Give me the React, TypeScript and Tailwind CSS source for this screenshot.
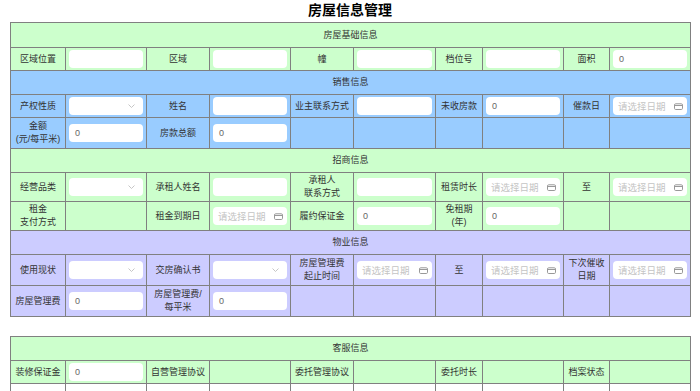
import React from "react";

function Inp({ v }: { v?: string }) {
  return (
    <div className="h-[18px] w-full rounded-[4px] bg-white flex items-center px-[6px] text-[9px] text-[#666] text-left">
      {v ?? ""}
    </div>
  );
}

function Sel() {
  return (
    <div className="h-[18px] w-full rounded-[4px] bg-white flex items-center justify-end pr-[8px]">
      <svg width="7" height="4" viewBox="0 0 7 4">
        <path d="M0.5 0.5 L3.5 3.5 L6.5 0.5" fill="none" stroke="#c0c0c0" strokeWidth="0.9" />
      </svg>
    </div>
  );
}

function DateInp() {
  return (
    <div className="h-[18px] w-full rounded-[4px] bg-white flex items-center justify-between pl-[5px] pr-[4px] text-[9.5px] text-[#c4c4c4] whitespace-nowrap">
      <span>请选择日期</span>
      <svg width="9" height="7" viewBox="0 0 9 7" className="shrink-0">
        <rect x="0.5" y="0.8" width="8" height="5.7" rx="1.2" fill="none" stroke="#999" strokeWidth="1" />
        <line x1="0.5" y1="2.5" x2="8.5" y2="2.5" stroke="#999" strokeWidth="1" />
      </svg>
    </div>
  );
}

const td = "border border-[#808080] px-[3px] py-0 text-center align-middle text-[9px] leading-[13px] text-[#333]";
const lab = "border border-[#808080] px-0 py-0 text-center align-middle text-[9px] leading-[13px] text-[#333] whitespace-nowrap";

function L({ children }: { children?: React.ReactNode }) {
  return <td className={lab}>{children}</td>;
}
function C({ children }: { children?: React.ReactNode }) {
  return <td className={td}>{children}</td>;
}

function Cols() {
  return (
    <colgroup>
      <col className="w-[55px]" />
      <col className="w-[81px]" />
      <col className="w-[63px]" />
      <col className="w-[81px]" />
      <col className="w-[63px]" />
      <col className="w-[82px]" />
      <col className="w-[47px]" />
      <col className="w-[81px]" />
      <col className="w-[46px]" />
      <col className="w-[81px]" />
    </colgroup>
  );
}

function Head({ text, bg, h }: { text: string; bg: string; h: string }) {
  return (
    <tr className={`${bg} ${h}`}>
      <td colSpan={10} className={td}>{text}</td>
    </tr>
  );
}

const tableCls =
  "table-fixed w-[680px] border-collapse border border-t-[#aaa] border-l-[#888] border-r-[#444] border-b-[#333]";

export default function App() {
  const G = "bg-[#ccffcc]";
  const B = "bg-[#99ccff]";
  const P = "bg-[#ccccff]";
  return (
    <div className="w-[700px] h-[391px] overflow-hidden bg-white font-['Liberation_Sans','Noto_Sans_CJK_SC',sans-serif]">
      <div className="h-[22px] text-center text-[14px] font-bold leading-[20px] text-black">房屋信息管理</div>
      <div className="px-[10px]">
        <table className={tableCls}>
          <Cols />
          <tbody>
            <Head text="房屋基础信息" bg={G} h="h-[25px]" />
            <tr className={`${G} h-[23px]`}>
              <L>区域位置</L><C><Inp /></C>
              <L>区域</L><C><Inp /></C>
              <L>幢</L><C><Inp /></C>
              <L>档位号</L><C><Inp /></C>
              <L>面积</L><C><Inp v="0" /></C>
            </tr>
            <Head text="销售信息" bg={B} h="h-[24px]" />
            <tr className={`${B} h-[23px]`}>
              <L>产权性质</L><C><Sel /></C>
              <L>姓名</L><C><Inp /></C>
              <L>业主联系方式</L><C><Inp /></C>
              <L>未收房款</L><C><Inp v="0" /></C>
              <L>催款日</L><C><DateInp /></C>
            </tr>
            <tr className={`${B} h-[31px]`}>
              <L>金额<br />(元/每平米)</L><C><Inp v="0" /></C>
              <L>房款总额</L><C><Inp v="0" /></C>
              <C /><C /><C /><C /><C /><C />
            </tr>
            <Head text="招商信息" bg={G} h="h-[24px]" />
            <tr className={`${G} h-[29px]`}>
              <L>经营品类</L><C><Sel /></C>
              <L>承租人姓名</L><C><Inp /></C>
              <L>承租人<br />联系方式</L><C><Inp /></C>
              <L>租赁时长</L><C><DateInp /></C>
              <L>至</L><C><DateInp /></C>
            </tr>
            <tr className={`${G} h-[29px]`}>
              <L>租金<br />支付方式</L><C />
              <L>租金到期日</L><C><DateInp /></C>
              <L>履约保证金</L><C><Inp v="0" /></C>
              <L>免租期<br />(年)</L><C><Inp v="0" /></C>
              <C /><C />
            </tr>
            <Head text="物业信息" bg={P} h="h-[24px]" />
            <tr className={`${P} h-[31px]`}>
              <L>使用现状</L><C><Sel /></C>
              <L>交房确认书</L><C><Sel /></C>
              <L>房屋管理费<br />起止时间</L><C><DateInp /></C>
              <L>至</L><C><DateInp /></C>
              <L>下次催收<br />日期</L><C><DateInp /></C>
            </tr>
            <tr className={`${P} h-[31px]`}>
              <L>房屋管理费</L><C><Inp v="0" /></C>
              <L>房屋管理费/<br />每平米</L><C><Inp v="0" /></C>
              <C /><C /><C /><C /><C /><C />
            </tr>
          </tbody>
        </table>
        <table className={`mt-[19px] ${tableCls}`}>
          <Cols />
          <tbody>
            <Head text="客服信息" bg={G} h="h-[24px]" />
            <tr className={`${G} h-[23px]`}>
              <L>装修保证金</L><C><Inp v="0" /></C>
              <L>自营管理协议</L><C />
              <L>委托管理协议</L><C />
              <L>委托时长</L><C />
              <L>档案状态</L><C />
            </tr>
            <tr className="bg-white h-[23px]">
              <C /><C /><C /><C /><C /><C /><C /><C /><C /><C />
            </tr>
          </tbody>
        </table>
      </div>
    </div>
  );
}
